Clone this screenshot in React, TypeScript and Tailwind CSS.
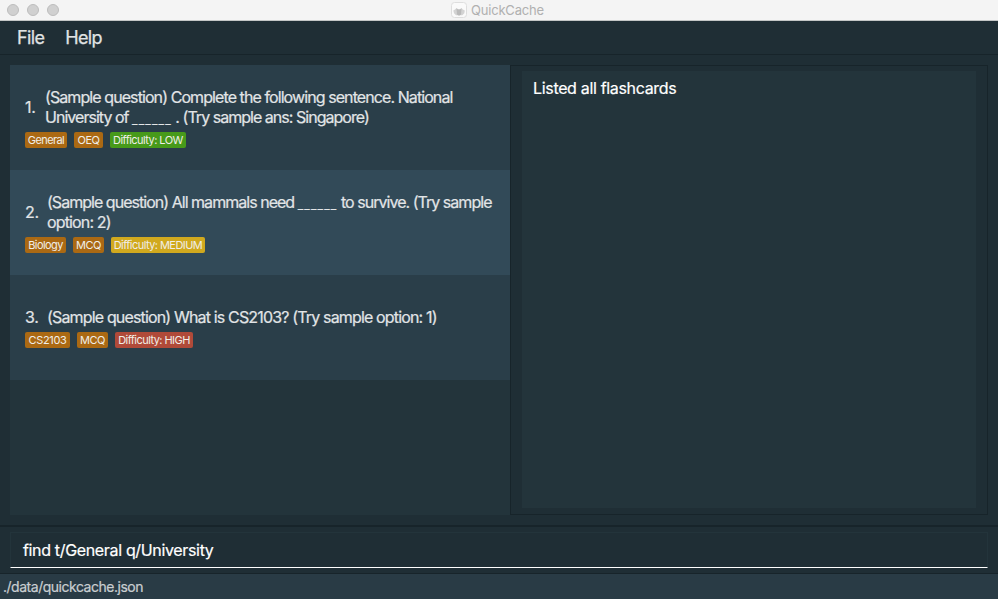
import { Fragment } from 'react';

type Tag = { label: string; color: string; box: string; spacing: string };
type Card = {
  id: string;
  lines: { text: string; spacing: string }[];
  tags: Tag[];
  bg: string;
  gap: string;
};

const BLANK = '______';

const cards: Card[] = [
  {
    id: '1.',
    bg: 'bg-[#2a3e49]',
    gap: 'w-[20px]',
    lines: [
      { text: '(Sample question) Complete the following sentence. National', spacing: 'tracking-[-0.915px]' },
      { text: 'University of ______ . (Try sample ans: Singapore)', spacing: 'tracking-[-0.97px]' },
    ],
    tags: [
      { label: 'General', color: 'bg-[#ab6913]', box: 'w-[42px]', spacing: 'tracking-[-0.6px]' },
      { label: 'OEQ', color: 'bg-[#ab6913]', box: 'w-[29px]', spacing: 'tracking-[-0.5px]' },
      { label: 'Difficulty: LOW', color: 'bg-[#479a1a]', box: 'w-[76px]', spacing: 'tracking-[-0.55px]' },
    ],
  },
  {
    id: '2.',
    bg: 'bg-[#324a58]',
    gap: 'w-[22px]',
    lines: [
      { text: '(Sample question) All mammals need ______ to survive. (Try sample', spacing: 'tracking-[-0.97px]' },
      { text: 'option: 2)', spacing: 'tracking-[-0.85px]' },
    ],
    tags: [
      { label: 'Biology', color: 'bg-[#ab6913]', box: 'w-[41px]', spacing: 'tracking-[-0.6px]' },
      { label: 'MCQ', color: 'bg-[#ab6913]', box: 'w-[31px]', spacing: 'tracking-[-0.4px]' },
      { label: 'Difficulty: MEDIUM', color: 'bg-[#d1a91e]', box: 'w-[94px]', spacing: 'tracking-[-0.55px]' },
    ],
  },
  {
    id: '3.',
    bg: 'bg-[#2a3e49]',
    gap: 'w-[22px]',
    lines: [{ text: '(Sample question) What is CS2103? (Try sample option: 1)', spacing: 'tracking-[-0.84px]' }],
    tags: [
      { label: 'CS2103', color: 'bg-[#ab6913]', box: 'w-[45px]', spacing: 'tracking-[-0.3px]' },
      { label: 'MCQ', color: 'bg-[#ab6913]', box: 'w-[31px]', spacing: 'tracking-[-0.4px]' },
      { label: 'Difficulty: HIGH', color: 'bg-[#b04a39]', box: 'w-[78px]', spacing: 'tracking-[-0.55px]' },
    ],
  },
];

function TitleBar() {
  return (
    <header className="flex h-[21px] shrink-0 items-center border-b border-[#c4c6c6] bg-[#f4f4f4]">
      <div className="flex w-[451px] gap-2 pl-[7px]">
        <span className="size-3 rounded-full border border-[#bdbdbd] bg-[#d0d0d0]" />
        <span className="size-3 rounded-full border border-[#bdbdbd] bg-[#d0d0d0]" />
        <span className="size-3 rounded-full border border-[#bdbdbd] bg-[#d0d0d0]" />
      </div>
      <svg viewBox="0 0 16 16" className="size-4 shrink-0">
        <rect x="0.5" y="0.5" width="15" height="15" rx="3" fill="#fafafa" stroke="#dedede" />
        <path d="M2.300 8.500 4 7.500 5.500 6l1.800 1.200h1.500L10.500 6l1.300 1.500 2 1-.5 2.800-2 2H5l-2-2Z" fill="#d3d3d3" />
        <path d="M5.500 6.500 7 7.500h2l1.500-1-.5 6-2 1.300-2-1.300Z" fill="#bababa" />
      </svg>
      <span className="ml-1 text-[13px] leading-5 tracking-[-0.2px] text-[#b0b0b0]">QuickCache</span>
    </header>
  );
}

/** Question text; blanks to fill in are drawn as separated dashes. */
function QuestionLine({ text }: { text: string }) {
  return text.split(BLANK).map((part, i) => (
    <Fragment key={i}>
      {i > 0 && <span className="align-[-1px] text-[12px] leading-none tracking-[1.15px]">{BLANK}</span>}
      {part}
    </Fragment>
  ));
}

function CardRow({ card }: { card: Card }) {
  return (
    <li className={`flex h-[105px] flex-col justify-center pl-[15px] ${card.bg}`}>
      <div className="flex items-center text-[16px] leading-5 text-[#e2e5e7] [-webkit-text-stroke:0.2px]">
        <span className={`shrink-0 tracking-[-0.3px] ${card.gap}`}>{card.id}</span>
        <div className="whitespace-nowrap">
          {card.lines.map((l) => (
            <p key={l.text} className={`h-5 ${l.spacing}`}>
              <QuestionLine text={l.text} />
            </p>
          ))}
        </div>
      </div>
      <div className="mt-[5px] flex gap-[7px]">
        {card.tags.map((t) => (
          <span
            key={t.label}
            className={`flex h-4 items-center justify-center rounded-[2px] text-[11px] leading-4 whitespace-nowrap text-[#f0eee8] ${t.color} ${t.box} ${t.spacing}`}
          >
            {t.label}
          </span>
        ))}
      </div>
    </li>
  );
}

export default function App() {
  return (
    <div className="flex h-[599px] w-[998px] flex-col overflow-hidden bg-[#1f2e35] font-['Inter',sans-serif]">
      <TitleBar />
      <nav className="flex h-[34px] shrink-0 gap-[21px] border-b border-[#17242a] pl-[17px] text-[18px] leading-[34px] tracking-[-0.65px] text-[#e0e3e4] [-webkit-text-stroke:0.25px]">
        <span>File</span>
        <span>Help</span>
      </nav>
      <main className="flex h-[470px] shrink-0 px-[10px] pt-[10px] pb-[10px]">
        <ul className="w-[500px] bg-[#23343b]">
          {cards.map((c) => (
            <CardRow key={c.id} card={c} />
          ))}
        </ul>
        <section className="flex-1 border border-[#17242a] px-[11px] pt-[5px] pb-[6px]">
          <div className="h-full bg-[#23343b] px-[11px] pt-[7px] text-[16px] leading-5 tracking-[-0.33px] text-white [-webkit-text-stroke:0.2px]">
            Listed all flashcards
          </div>
        </section>
      </main>
      <section className="h-[49px] shrink-0 border-t-2 border-b border-t-[#17242a] border-b-[#17242a] px-[10px] pt-[5px]">
        <div className="h-9 border border-[#23343b] border-b-white pl-3 text-[16px] leading-[35px] tracking-[-0.34px] text-white [-webkit-text-stroke:0.2px]">
          find t/General q/University
        </div>
      </section>
      <footer className="flex-1 border-b border-[#3b4b54] bg-[#293b45] pl-[3px] text-[14px] leading-[26px] tracking-[-0.48px] text-[#c9ced1] [-webkit-text-stroke:0.2px]">
        ./data/quickcache.json
      </footer>
    </div>
  );
}
